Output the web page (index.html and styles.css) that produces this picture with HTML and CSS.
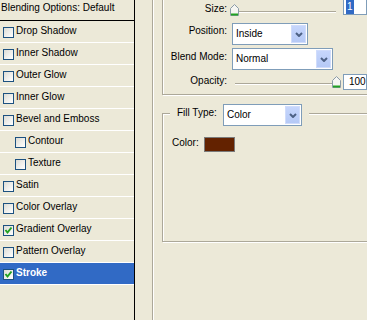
FILE: index.html
```html
<!DOCTYPE html>
<html>
<head>
<meta charset="utf-8">
<title>Layer Style - Stroke</title>
<link rel="stylesheet" href="styles.css">
</head>
<body>
<div class="dialog">
  <div class="styles">
    <div class="styles-head">Blending Options: Default</div>
    <ul class="style-list">
      <li><span class="check"></span>Drop Shadow</li>
      <li><span class="check"></span>Inner Shadow</li>
      <li><span class="check"></span>Outer Glow</li>
      <li><span class="check"></span>Inner Glow</li>
      <li><span class="check"></span>Bevel and Emboss</li>
      <li class="sub"><span class="check"></span>Contour</li>
      <li class="sub"><span class="check"></span>Texture</li>
      <li><span class="check"></span>Satin</li>
      <li><span class="check"></span>Color Overlay</li>
      <li><span class="check"><svg width="9" height="9" viewBox="0 0 9 9"><polyline points="1.5,4 3.5,6.5 7.5,1.5" fill="none" stroke="#21a121" stroke-width="2"/></svg></span>Gradient Overlay</li>
      <li><span class="check"></span>Pattern Overlay</li>
      <li class="selected"><span class="check"><svg width="9" height="9" viewBox="0 0 9 9"><polyline points="1.5,4 3.5,6.5 7.5,1.5" fill="none" stroke="#21a121" stroke-width="2"/></svg></span>Stroke</li>
    </ul>
  </div>

  <div class="pane">
    <div class="group outer">
      <div class="group structure">
        <div class="form">
          <span class="lbl lbl-size">Size:</span>
          <div class="field">
            <div class="slider slider-size">
              <svg class="thumb" width="9" height="12" viewBox="0 0 9 12"><path d="M0.5 4.5 L4.5 0.5 L8.5 4.5 V11.5 H0.5 Z" fill="#f6f6f2" stroke="#8b9ba8"/><path d="M1 10.5 H8" stroke="#21a121" stroke-width="2"/></svg>
            </div>
            <div class="num"><span class="sel">1</span></div>
          </div>

          <span class="lbl lbl-pos">Position:</span>
          <div class="field">
            <div class="combo combo-pos">
              <span class="combo-text">Inside</span>
              <span class="combo-btn"><svg width="8" height="5" viewBox="0 0 8 5"><polyline points="1,1 4,4 7,1" fill="none" stroke="#4d6185" stroke-width="2"/></svg></span>
            </div>
          </div>

          <span class="lbl lbl-blend">Blend Mode:</span>
          <div class="field">
            <div class="combo combo-blend">
              <span class="combo-text">Normal</span>
              <span class="combo-btn"><svg width="8" height="5" viewBox="0 0 8 5"><polyline points="1,1 4,4 7,1" fill="none" stroke="#4d6185" stroke-width="2"/></svg></span>
            </div>
          </div>

          <span class="lbl lbl-opacity">Opacity:</span>
          <div class="field">
            <div class="slider slider-opacity">
              <svg class="thumb max" width="9" height="12" viewBox="0 0 9 12"><path d="M0.5 4.5 L4.5 0.5 L8.5 4.5 V11.5 H0.5 Z" fill="#f6f6f2" stroke="#8b9ba8"/><path d="M1 10.5 H8" stroke="#21a121" stroke-width="2"/></svg>
            </div>
            <div class="num num-right">100</div>
          </div>
        </div>
      </div>

      <div class="group fill">
        <div class="legend">
          <span class="legend-label">Fill Type:</span>
          <div class="combo combo-fill">
            <span class="combo-text">Color</span>
            <span class="combo-btn"><svg width="8" height="5" viewBox="0 0 8 5"><polyline points="1,1 4,4 7,1" fill="none" stroke="#4d6185" stroke-width="2"/></svg></span>
          </div>
        </div>
        <div class="color-row">
          <span class="color-label">Color:</span>
          <span class="swatch"></span>
        </div>
      </div>
    </div>
  </div>
</div>
</body>
</html>
```

FILE: styles.css
```css
body {
  margin: 0;
  overflow: hidden;
  background: #ece9d8;
  color: #000;
  font-family: "Liberation Sans", Arial, sans-serif;
  font-size: 10px;
}
.dialog {
  display: flex;
  width: 600px;
  height: 320px;
}

/* style list on the left */
.styles {
  flex: none;
  width: 134px;
  border-right: 1px solid #000;
}
.styles-head {
  height: 20px;
  line-height: 16px;
  padding-left: 1px;
  border-bottom: 1px solid #000;
}
.style-list {
  list-style: none;
  margin: 0;
  padding: 0;
}
.style-list li {
  display: flex;
  align-items: flex-start;
  height: 17px;
  padding: 4px 0 0 3px;
  line-height: 12px;
  border-bottom: 1px solid #fff;
  white-space: nowrap;
}
.style-list li.sub {
  padding-left: 15px;
}
.style-list li.selected {
  background: #316ac5;
  color: #fff;
  font-weight: bold;
}
.check {
  flex: none;
  display: flex;
  align-items: center;
  justify-content: center;
  width: 11px;
  height: 11px;
  box-sizing: border-box;
  margin: 2px 2px 0 0;
  border: 1px solid #1c5180;
  background: linear-gradient(135deg, #dcdcd5, #fff);
}

/* right side */
.pane {
  flex: none;
  margin-top: -30px;
}
.group {
  border: 1px solid #aca899;
  box-shadow: inset 1px 1px 0 #fff, 1px 1px 0 #fff;
}
.outer {
  width: 260px;
  margin-left: 17px;
  padding: 9px 0 100px 9px;
}
.structure {
  padding: 18px 0 3px 0;
}
.form {
  display: grid;
  grid-template-columns: 64px 1fr;
  grid-template-rows: 24px 25px 26px 17px;
  column-gap: 3px;
}
.lbl {
  text-align: right;
  line-height: 12px;
  white-space: nowrap;
}
.lbl-size { margin-top: 4px; }
.lbl-pos { margin-top: 2px; }
.lbl-blend { margin-top: 3px; }
.lbl-opacity { margin-top: 1px; }
.field {
  display: flex;
  align-items: flex-start;
}

.slider {
  position: relative;
  width: 111px;
  height: 12px;
}
.slider::before {
  content: "";
  position: absolute;
  left: 5px;
  right: 5px;
  top: 7px;
  border-top: 1px solid #aca899;
  border-bottom: 1px solid #fff;
}
.slider-size { margin-top: 5px; }
.slider-opacity { margin-top: 2px; }
.thumb {
  position: absolute;
  left: 0;
  top: 0;
}
.thumb.max {
  left: 102px;
}
.num {
  width: 24px;
  height: 16px;
  box-sizing: border-box;
  margin-left: 2px;
  padding-left: 2px;
  border: 1px solid #7f9db9;
  background: #fff;
  line-height: 14px;
}
.num-right {
  padding-left: 5px;
}
.sel {
  display: inline-block;
  padding: 0 1px;
  background: #316ac5;
  color: #fff;
}

.combo {
  display: flex;
  height: 22px;
  box-sizing: border-box;
  margin-left: 2px;
  border: 1px solid #7f9db9;
  background: #fff;
}
.combo-pos { width: 76px; }
.combo-blend { width: 101px; }
.combo-fill { width: 79px; margin-left: 0; }
.combo-text {
  flex: 1;
  padding-left: 3px;
  line-height: 20px;
}
.combo-btn {
  display: flex;
  align-items: center;
  justify-content: center;
  width: 15px;
  margin: 1px;
  box-sizing: border-box;
  border: 1px solid #d0dcfb;
  background: linear-gradient(#c6d6fc, #b5c9f6);
}

.fill {
  margin-top: 18px;
  padding-bottom: 89px;
}
.legend {
  display: flex;
  align-items: flex-start;
  width: fit-content;
  margin: -10px 0 0 7px;
  padding: 0 7px;
  background: #ece9d8;
}
.legend-label {
  width: 46px;
  margin-top: 3px;
  line-height: 12px;
  white-space: nowrap;
}
.color-row {
  display: flex;
  align-items: flex-start;
  margin: 11px 0 0 9px;
}
.color-label {
  width: 32px;
  line-height: 12px;
}
.swatch {
  width: 31px;
  height: 15px;
  box-sizing: border-box;
  border: 1px solid #7a7a7a;
  background: #632200;
}
```
